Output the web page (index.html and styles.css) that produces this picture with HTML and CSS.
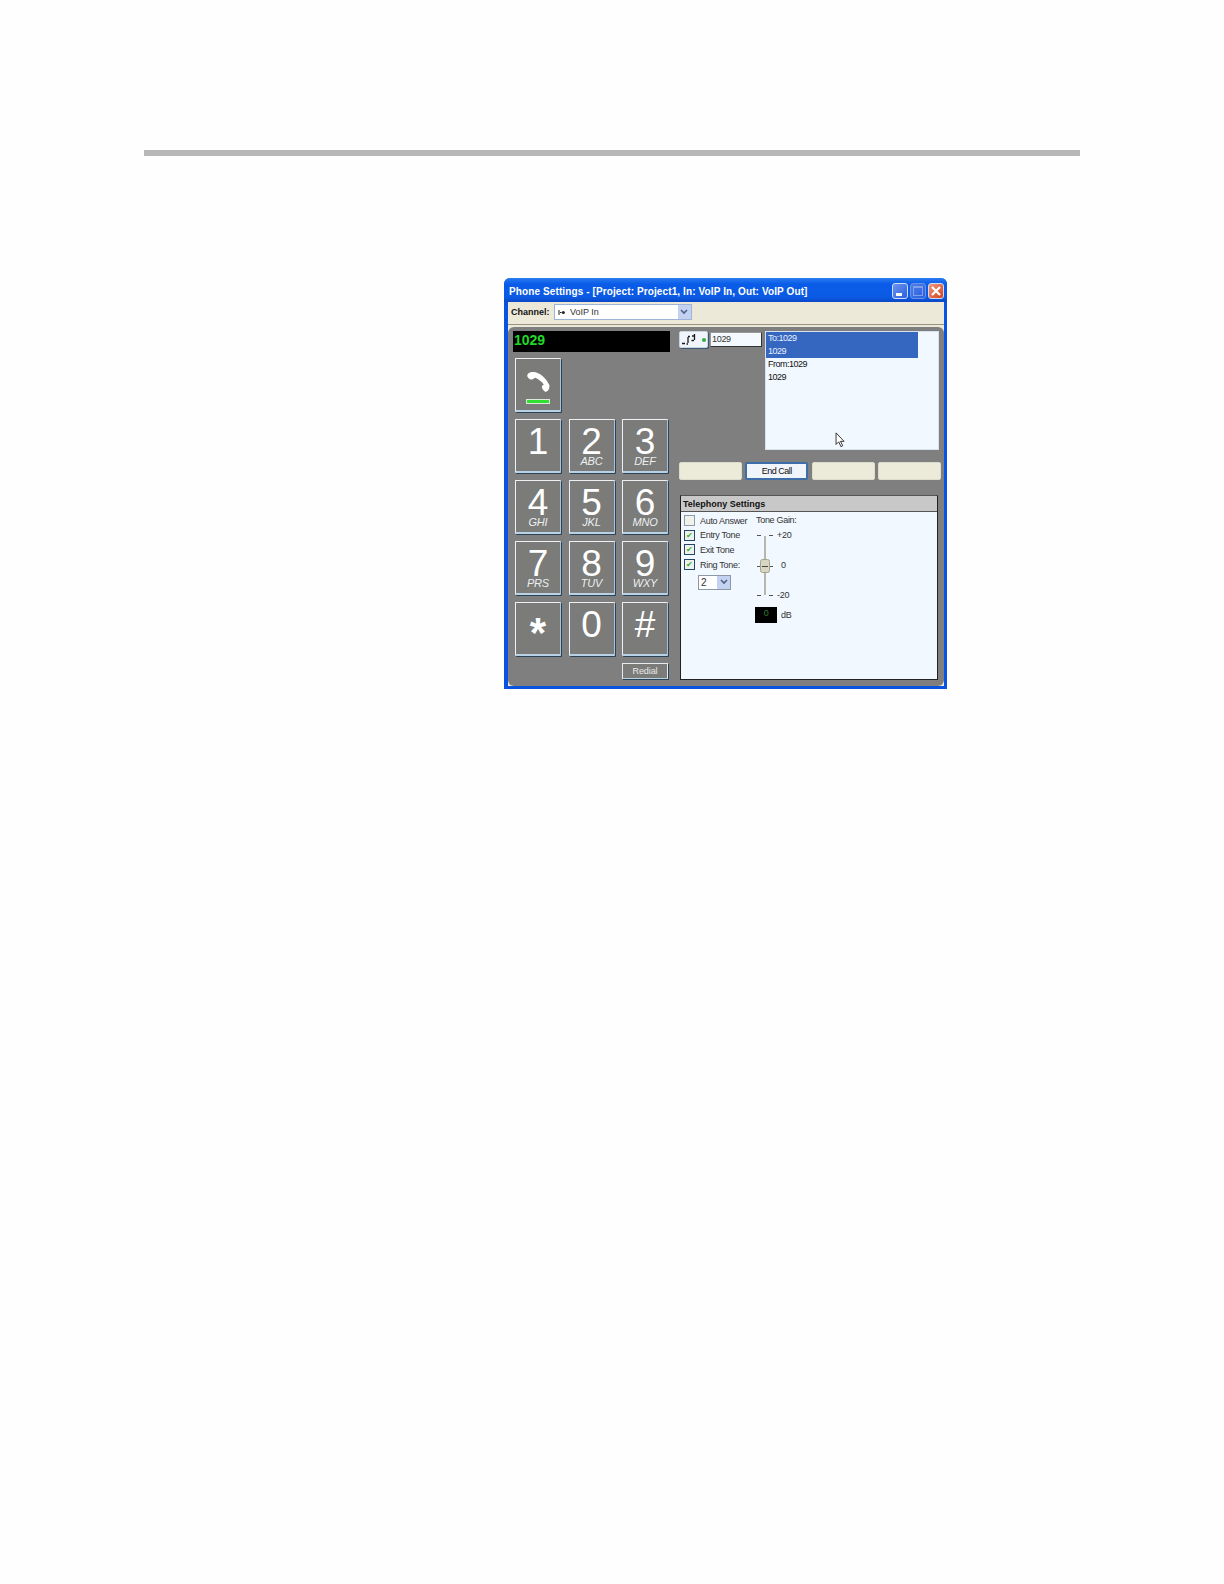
FILE: index.html
```html
<!DOCTYPE html>
<html lang="en">
<head>
<meta charset="utf-8">
<title>Phone Settings</title>
<link rel="stylesheet" href="styles.css">
</head>
<body>
<div class="rule"></div>
<section class="window">
  <header class="titlebar">
    <span class="title">Phone Settings - [Project: Project1, In: VoIP In, Out: VoIP Out]</span>
    <span class="winbtns">
      <span class="winbtn"><span class="min-glyph"></span></span>
      <span class="winbtn disabled"><span class="max-glyph"></span></span>
      <span class="winbtn close"><svg viewBox="0 0 12 12" width="12" height="12"><path d="M2 2 L10 10 M10 2 L2 10" stroke="#fff" stroke-width="2.2" fill="none"/></svg></span>
    </span>
  </header>
  <div class="toolbar">
    <b class="channel-label">Channel:</b>
    <div class="combo channel-combo">
      <span class="combo-text">
        <svg class="plug" viewBox="0 0 7 5" width="7" height="5"><path d="M1 0 V5 M2 2.5 H3.5" stroke="#222" stroke-width="1" fill="none"/><circle cx="5.3" cy="2.5" r="1.5" fill="#222"/></svg>
        VoIP In
      </span>
      <span class="combo-arrow"><svg viewBox="0 0 8 6" width="8" height="6"><path d="M1 1 L4 4 L7 1" stroke="#4d6185" stroke-width="1.6" fill="none"/></svg></span>
    </div>
  </div>
  <div class="panel">
    <div class="left">
      <div class="display">1029</div>
      <button class="key hook">
        <svg class="handset" viewBox="0 0 26 23" width="26" height="22"><path d="M2 6 C1 3 4 1 8 1 C15 1 22 8 25 15 C25 19 24 21 21 22 C19 21 17 19 17 16 L19 14 C17 11 13 8 10 7 L7 9 C5 9 3 8 2 6 Z" fill="#fff"/></svg>
        <span class="led"></span>
      </button>
      <div class="keypad">
        <button class="key"><span class="num">1</span></button>
        <button class="key"><span class="num">2</span><i>ABC</i></button>
        <button class="key"><span class="num">3</span><i>DEF</i></button>
        <button class="key"><span class="num">4</span><i>GHI</i></button>
        <button class="key"><span class="num">5</span><i>JKL</i></button>
        <button class="key"><span class="num">6</span><i>MNO</i></button>
        <button class="key"><span class="num">7</span><i>PRS</i></button>
        <button class="key"><span class="num">8</span><i>TUV</i></button>
        <button class="key"><span class="num">9</span><i>WXY</i></button>
        <button class="key"><span class="num star">*</span></button>
        <button class="key"><span class="num">0</span></button>
        <button class="key"><span class="num">#</span></button>
      </div>
      <div class="redial-row"><button class="redial">Redial</button></div>
    </div>
    <div class="right">
      <div class="top-row">
        <div class="line-col">
          <button class="net">
            <svg viewBox="0 0 16 13" width="16" height="13"><path d="M1 10.5 H4 M7 4 V10 M5.5 11 H7 M7 3.5 H9 M11 3 H13 M13.5 1 V7 M10.5 7.5 H13" stroke="#1a1a1a" stroke-width="1.3" fill="none"/></svg>
            <span class="dot"></span>
          </button>
          <div class="number-input">1029</div>
        </div>
        <div class="calls">
          <div class="call selected"><div>To:1029</div><div>1029</div></div>
          <div class="call"><div>From:1029</div><div>1029</div></div>
          <svg class="cursor" viewBox="0 0 12 18" width="11" height="16"><path d="M1 1 L1 14 L4 11 L6.5 16.5 L8.5 15.5 L6 10.5 L10 10.5 Z" fill="#fff" stroke="#222" stroke-width="1"/></svg>
        </div>
      </div>
      <div class="softkeys">
        <button class="soft"></button>
        <button class="soft active">End Call</button>
        <button class="soft"></button>
        <button class="soft"></button>
      </div>
      <div class="settings">
        <div class="settings-head">Telephony Settings</div>
        <div class="settings-body">
          <div class="checks">
            <label class="check"><span class="box empty"></span>Auto Answer</label>
            <label class="check"><span class="box">✔</span>Entry Tone</label>
            <label class="check"><span class="box">✔</span>Exit Tone</label>
            <label class="check"><span class="box">✔</span>Ring Tone:</label>
            <div class="combo ring-combo">
              <span class="combo-text">2</span>
              <span class="combo-arrow"><svg viewBox="0 0 8 6" width="8" height="6"><path d="M1 1 L4 4 L7 1" stroke="#4d6185" stroke-width="1.6" fill="none"/></svg></span>
            </div>
          </div>
          <div class="gain">
            <div class="gain-title">Tone Gain:</div>
            <div class="slider-wrap">
              <svg class="slider" viewBox="0 0 16 64" width="16" height="64">
                <path d="M8 3 V62" stroke="#a8a288" stroke-width="1.5"/>
                <path d="M0 2.5 H4 M12 2.5 H16 M0 33.5 H16 M0 62.5 H4 M12 62.5 H16" stroke="#555" stroke-width="1"/>
                <rect x="3.5" y="26.5" width="9" height="13" rx="2" fill="#d8d6c2" stroke="#a5a38c"/>
                <path d="M5 33.5 H11" stroke="#444" stroke-width="1"/>
              </svg>
              <div class="scale"><span>+20</span><span class="zero">0</span><span>-20</span></div>
            </div>
            <div class="db-row"><span class="db-box">0</span><span>dB</span></div>
          </div>
        </div>
      </div>
    </div>
  </div>
</section>
</body>
</html>
```
FILE: styles.css
```css
* { box-sizing: border-box; }
html, body { margin: 0; padding: 0; background: #fefefe; }
body { width: 1224px; height: 1584px; overflow: hidden; font-family: "Liberation Sans", Arial, sans-serif; }
button { font: inherit; padding: 0; margin: 0; }

.rule { height: 6px; margin: 150px 144px 0 144px; background: #b7b7b7; }

.window {
  width: 443px; height: 411px; margin: 122px 0 0 504px;
  display: flex; flex-direction: column;
  background: #ece9d8; border-radius: 6px 6px 0 0;
  border: solid #0a52e0; border-width: 0 3px 3px 4px;
}
.titlebar {
  height: 24px; flex: none; display: flex; align-items: center; justify-content: space-between;
  margin: 0 -3px 0 -4px; padding: 2px 3px 0 5px;
  border-radius: 6px 6px 0 0;
  background: linear-gradient(#2a7cf0, #0a5ce8 25%, #0b5ae4 80%, #0a48c4);
}
.title { color: #fff; font-size: 10px; font-weight: bold; letter-spacing: .11px; white-space: nowrap; }
.winbtns { display: flex; gap: 2px; }
.winbtn {
  width: 16px; height: 16px; border: 1px solid #cfdcf8; border-radius: 3px;
  background: linear-gradient(135deg, #6d95ee, #2a5fe0);
  display: flex; align-items: center; justify-content: center;
}
.min-glyph { width: 6px; height: 3px; background: #fff; margin: 7px 3px 0 0; }
.winbtn.disabled { border-color: #6d92e4; background: linear-gradient(135deg, #4c7fe6, #2a5fe0); }
.max-glyph { width: 10px; height: 10px; border: 1px solid #7fa0ea; border-top-width: 2px; }
.winbtn.close { background: linear-gradient(135deg, #eb9a80, #d8431c); }

.toolbar {
  height: 23px; flex: none; display: flex; align-items: center; gap: 4px; padding: 0 0 3px 3px;
  background: #ece9d8; border-bottom: 1px solid #97937e;
}
.channel-label { font-size: 9px; color: #111; }
.combo { display: flex; background: #fff; border: 1px solid #9db4d8; }
.channel-combo { width: 138px; height: 16px; }
.combo-text { flex: 1; font-size: 9px; line-height: 14px; color: #333; padding-left: 3px; white-space: nowrap; }
.plug { margin-right: 3px; }
.combo-arrow { width: 13px; background: #c4d2f2; display: flex; align-items: center; justify-content: center; }

.panel {
  flex: 1; display: flex; background: #7f7f7f; border-radius: 6px;
  margin-top: 2px; padding: 4px 0 0 5px; gap: 9px; min-height: 0;
}
.left { width: 157px; flex: none; }
.display {
  height: 21px; background: #000; color: #20d82a; font-size: 14px; font-weight: bold;
  line-height: 19px; padding-left: 1px;
}
.key {
  width: 46px; height: 54px; background: #7b7b79; color: #fff;
  border: 1px solid #eef1f3; border-right-color: #a8c2d8; border-bottom: 2px solid #b9d1e4;
  box-shadow: 1px 1px 0 #2c4356; border-radius: 1px;
  display: flex; flex-direction: column; align-items: center;
}
.hook { margin: 6px 0 0 2px; padding-top: 12px; }
.handset { flex: none; }
.led { width: 24px; height: 5px; margin-top: 6px; background: #2fe02f; border: 1px solid #dce8dc; }
.keypad {
  display: grid; grid-template-columns: repeat(3, 46px); grid-auto-rows: 54px;
  column-gap: 7.5px; row-gap: 7px; margin: 7px 0 0 2px;
}
.num { font-size: 37px; line-height: 30px; height: 29px; margin-top: 7px; }
.star { font-size: 42px; font-weight: bold; line-height: 46px; }
.key i { font-size: 11px; line-height: 11px; color: #eceff0; letter-spacing: -.2px; }
.redial-row { display: flex; justify-content: flex-end; margin: 7px 2px 0 0; }
.redial {
  width: 46px; height: 16px; background: #7b7b79; color: #e9e9e9; font-size: 9px;
  border: 1px solid #e6ebef; border-bottom-color: #b9d1e4; box-shadow: 1px 1px 0 #2c4356; letter-spacing: -.1px;
}

.right { width: 265px; flex: none; }
.top-row { display: flex; gap: 3px; height: 119px; }
.line-col { display: flex; gap: 2px; width: 83px; align-items: flex-start; }
.net {
  width: 29px; height: 17px; background: #f0f5fc; border: 1px solid #c9d4df; box-shadow: 1px 1px 0 #3a5875;
  display: flex; align-items: center; gap: 2px; padding-left: 1px; border-radius: 2px; flex: none;
}
.dot { width: 4px; height: 4px; border-radius: 50%; background: #2fae3a; margin-left: 3px; }
.number-input {
  width: 52px; height: 15px; margin-top: 1px; background: #f4f9ff; border: 1px solid #333;
  border-left-color: #999; border-top-color: #999; font-size: 9px; line-height: 13px; padding-left: 1px; color: #333; letter-spacing: -.3px;
}
.calls {
  width: 174px; background: #f1f8ff; color: #111; font-size: 9px; position: relative;
  border: 1px solid #d7e2ee; line-height: 12.5px; letter-spacing: -.5px;
}
.call { padding-left: 2px; }
.selected { width: 152px; background: #3567c1; color: #e8effa; height: 26px; }
.cursor { position: absolute; left: 69px; top: 100px; }

.softkeys { display: flex; gap: 3.3px; margin-top: 12px; }
.soft {
  width: 63px; height: 18px; background: #ecebd9; border: 1px solid #dcdccc; border-radius: 2px;
  font-size: 9px; color: #111; letter-spacing: -.5px;
}
.soft.active { background: #f0f4fb; border: 2px solid #3e6ea8; }

.settings {
  width: 258px; height: 185px; margin: 15px 0 0 1px; background: #f1f8ff;
  border: 1px solid #222; border-top-color: #555;
  display: flex; flex-direction: column;
}
.settings-head {
  height: 16px; flex: none; background: #c8c8c8; border-bottom: 1px solid #555;
  font-size: 9px; font-weight: bold; line-height: 17px; padding-left: 2px; color: #111;
}
.settings-body { display: flex; padding: 3px 0 0 3px; gap: 11px; font-size: 9px; color: #333; letter-spacing: -.3px; }
.checks { width: 61px; display: flex; flex-direction: column; gap: 3.7px; }
.check { display: flex; align-items: center; gap: 5px; height: 11px; white-space: nowrap; }
.box {
  width: 11px; height: 11px; flex: none; border: 1px solid #23466b; background: #f0f2ea;
  color: #35b035; font-size: 8px; line-height: 9px; text-align: center; letter-spacing: 0;
}
.box.empty { border-color: #8e9ba8; }
.ring-combo { width: 33px; height: 15px; margin: 1px 0 0 14px; border-color: #8c98aa; }
.ring-combo .combo-text { font-size: 10px; line-height: 13px; padding-left: 2px; }
.gain { display: flex; flex-direction: column; }
.gain-title { height: 11px; line-height: 11px; white-space: nowrap; }
.slider-wrap { display: flex; gap: 4px; margin: 7px 0 0 1px; height: 64px; }
.slider { flex: none; }
.scale { display: flex; flex-direction: column; justify-content: space-between; height: 70px; margin-top: -3px; line-height: 10px; }
.zero { margin-left: 4px; }
.db-row { display: flex; align-items: center; gap: 4px; margin: 10px 0 0 -1px; }
.db-box { width: 22px; height: 16px; background: #000; color: #2f7d2f; text-align: center; line-height: 13px; }
```
